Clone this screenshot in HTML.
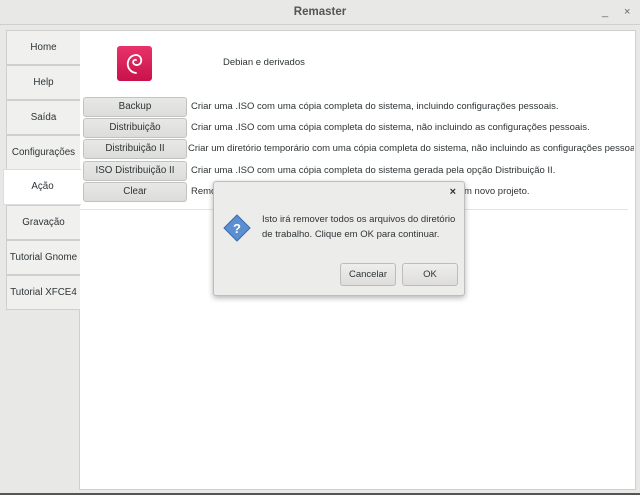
<!DOCTYPE html>
<html><head><style>
*{margin:0;padding:0;box-sizing:border-box}
body{width:640px;height:495px;background:#e8e8e7;font-family:"Liberation Sans",sans-serif;font-size:9.5px;color:#2e3436;position:relative;overflow:hidden}
.title{position:absolute;left:0;top:0;width:640px;height:25px;background:#e8e8e7;border-bottom:1px solid #d0d0cd;text-align:center;line-height:25px;font-weight:bold;color:#555;font-size:11.5px}
.ctl{position:absolute;top:0;line-height:25px;color:#666;font-size:11px}
.content{position:absolute;left:79px;top:30px;width:557px;height:460px;background:#fff;border:1px solid #cfcfcd}
.tab{position:absolute;left:6px;width:74px;height:35px;background:#f0f0ef;border:1px solid #cfcfcd;border-right:none;text-align:center;line-height:34px;font-size:9.8px}
.tab.act{background:#fff;left:3px;width:78px;border-color:#ddd;z-index:2}
.btn{position:absolute;left:83px;width:104px;height:20px;background:linear-gradient(#e8e8e7,#dcdcdb);border:1px solid #c2c2c0;border-radius:3px;text-align:center;line-height:18px;font-size:9.8px}
.desc{position:absolute;line-height:20px;white-space:nowrap}
.dlg{position:absolute;left:213px;top:181px;width:252px;height:115px;background:#ececeb;border:1px solid #bdbdbb;box-shadow:0 2px 6px rgba(0,0,0,.3);border-radius:3px}
.db{position:absolute;top:81px;width:56px;height:23px;background:linear-gradient(#eeeeed,#dedddc);border:1px solid #bcbcba;border-radius:3px;text-align:center;line-height:21px}
</style></head><body>
<div class="title">Remaster</div>
<div class="ctl" style="left:602px">_</div>
<div class="ctl" style="left:624px">×</div>
<div class="content">
 <div style="position:absolute;left:0;top:178px;width:548px;border-top:1px solid #e4e4e4"></div>
</div>
<div class="tab" style="top:30px">Home</div>
<div class="tab" style="top:65px">Help</div>
<div class="tab" style="top:100px">Saída</div>
<div class="tab" style="top:135px">Configurações</div>
<div class="tab act" style="top:169px;height:36px">Ação</div>
<div class="tab" style="top:205px">Gravação</div>
<div class="tab" style="top:240px">Tutorial Gnome</div>
<div class="tab" style="top:275px">Tutorial XFCE4</div>
<div style="position:absolute;left:117px;top:46px;width:35px;height:35px;border-radius:3px;background:linear-gradient(#e8336a,#c9114a)">
<svg width="35" height="35" viewBox="0 0 35 35"><path d="M19 27C12 26 10 20 11 16 12 11 16 9 19 9 23 9 25 13 24 16 23 19 19 20 17 18 15 16 17 13 19 14" fill="none" stroke="#fff" stroke-width="1.8" stroke-linecap="round"/></svg></div>
<div class="desc" style="left:223px;top:53px">Debian e derivados</div>
<div class="btn" style="top:97px">Backup</div>
<div class="btn" style="top:118px">Distribuição</div>
<div class="btn" style="top:139px">Distribuição II</div>
<div class="btn" style="top:161px">ISO Distribuição II</div>
<div class="btn" style="top:182px">Clear</div>
<div class="desc" style="left:191px;top:97px">Criar uma .ISO com uma cópia completa do sistema, incluindo configurações pessoais.</div>
<div class="desc" style="left:191px;top:118px">Criar uma .ISO com uma cópia completa do sistema, não incluindo as configurações pessoais.</div>
<div class="desc" style="left:188px;top:139px;width:446px;overflow:hidden">Criar um diretório temporário com uma cópia completa do sistema, não incluindo as configurações pessoais.</div>
<div class="desc" style="left:191px;top:161px">Criar uma .ISO com uma cópia completa do sistema gerada pela opção Distribuição II.</div>
<div class="desc" style="left:191px;top:182px">Remover todos os arquivos do diretório de trabalho para iniciar um novo projeto.</div>
<div class="dlg">
 <div style="position:absolute;right:8px;top:4px;font-weight:bold;font-size:11px">×</div>
 <svg style="position:absolute;left:9px;top:32px" width="28" height="28" viewBox="0 0 28 28"><path d="M14 1L27 14 14 27 1 14Z" fill="#5b8fd0" stroke="#3a6ab0"/><text x="14" y="19" text-anchor="middle" font-family="Liberation Sans" font-weight="bold" font-size="13" fill="#fff">?</text></svg>
 <div style="position:absolute;left:48px;top:30px;line-height:15px;white-space:nowrap">Isto irá remover todos os arquivos do diretório<br>de trabalho. Clique em OK para continuar.</div>
 <div class="db" style="left:126px">Cancelar</div>
 <div class="db" style="left:188px">OK</div>
</div>
<div style="position:absolute;left:0;top:493px;width:640px;height:2px;background:#555"></div>
</body></html>
